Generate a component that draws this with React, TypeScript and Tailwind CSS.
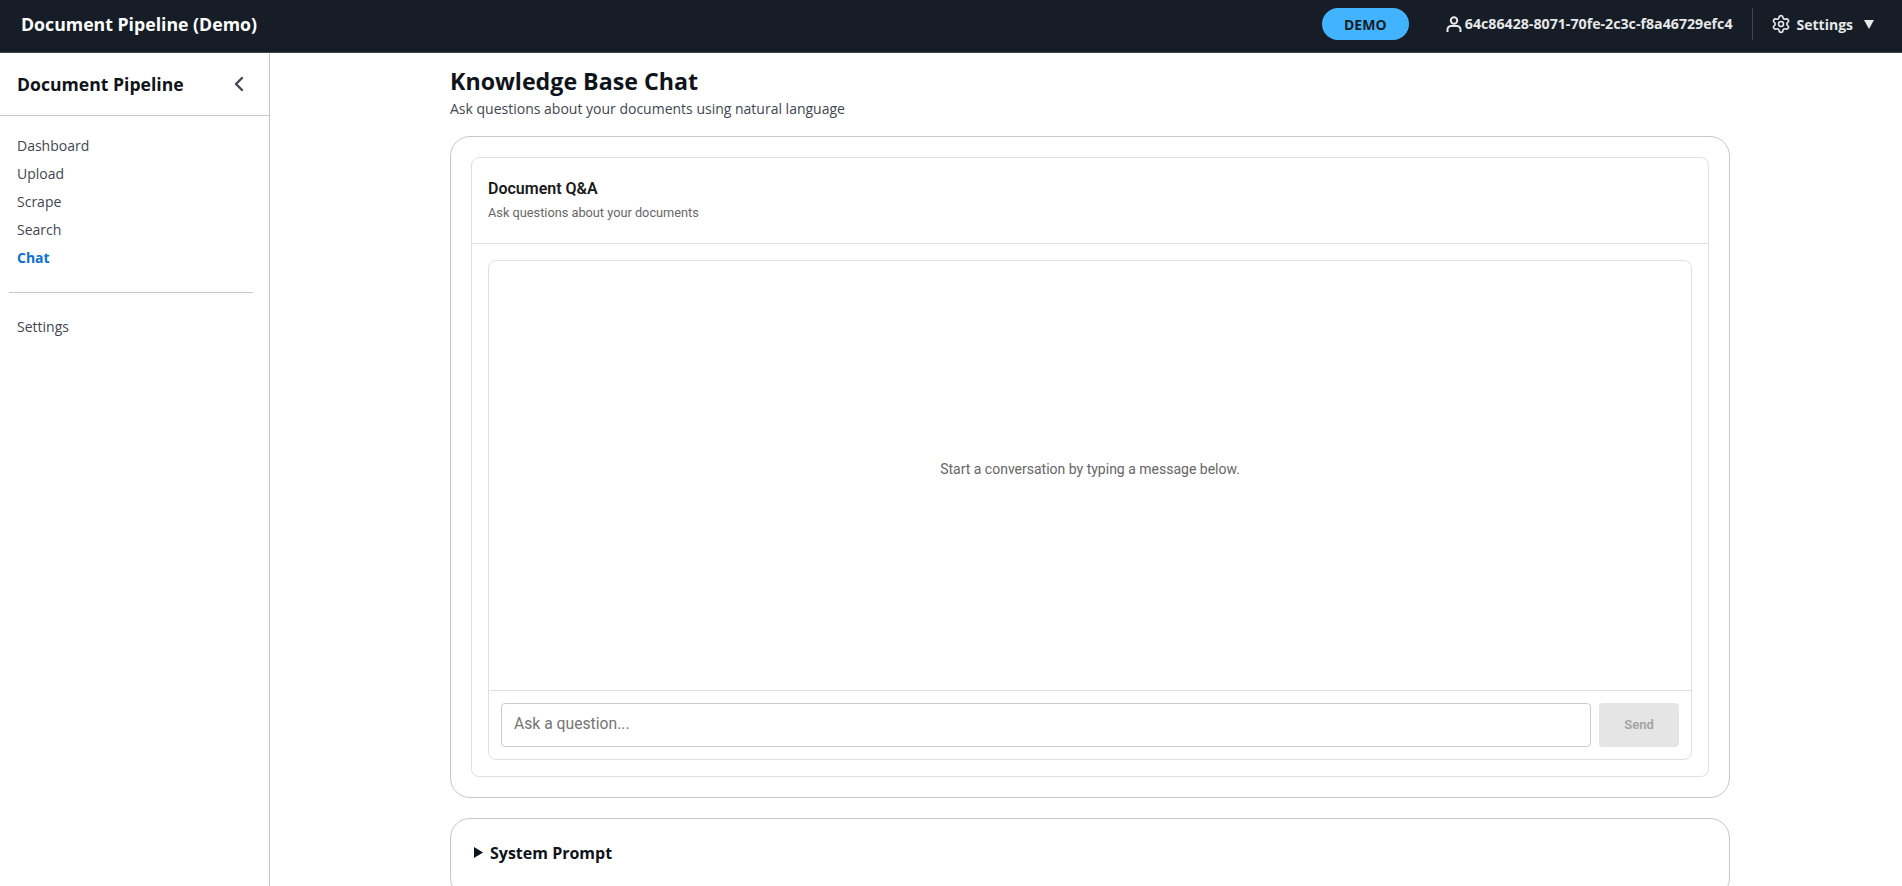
import { ChevronLeft, Settings } from "lucide-react";

const navItems = ["Dashboard", "Upload", "Scrape", "Search"];

const Header = () => (
  <header className="flex h-[53px] shrink-0 items-center justify-between border-b border-[#414750] bg-[#161d26] pb-[4px] pl-[21px] pr-[28px] text-white">
    <span className="text-[17.7px] font-bold">Document Pipeline (Demo)</span>
    <div className="flex items-center">
      <span className="flex h-8 w-[87px] items-center justify-center rounded-full bg-[#42b4ff] text-[14px] font-bold text-[#161d26]">
        DEMO
      </span>
      <div className="ml-[37px] flex items-center gap-[3px] text-[14.2px] font-bold text-[#e6e8ea]">
        {/* user profile icon, not in lucide with these proportions */}
        <svg width="16" height="16" viewBox="0 0 16 16" fill="none" stroke="currentColor" strokeWidth="2">
          <circle cx="8" cy="4.5" r="3.2" />
          <path d="M1.5 16v-2.5A3.5 3.5 0 0 1 5 10h6a3.5 3.5 0 0 1 3.5 3.5V16" />
        </svg>
        <span>64c86428-8071-70fe-2c3c-f8a46729efc4</span>
      </div>
      <div className="ml-[19px] h-8 w-px bg-[#414750]" />
      <div className="ml-[18px] flex items-center gap-[6px] text-[14px] font-bold text-[#e6e8ea]">
        <Settings size={20} strokeWidth={2} />
        <span>Settings</span>
        <svg className="ml-[5px]" width="10" height="9" viewBox="0 0 10 9">
          <path d="M0 0h10L5 9z" fill="#e6e8ea" />
        </svg>
      </div>
    </div>
  </header>
);

const Sidebar = () => (
  <aside className="flex w-[270px] shrink-0 flex-col border-r border-[#c6c6cd] bg-white">
    <div className="flex h-[63px] items-center justify-between border-b border-[#c6c6cd] pl-[17px] pr-[18px]">
      <span className="text-[17.6px] font-bold text-[#0f141a]">Document Pipeline</span>
      <ChevronLeft size={24} strokeWidth={2.4} className="text-[#424650]" />
    </div>
    <nav className="flex flex-col pt-[16px] text-[14px] leading-[28px] text-[#424650]">
      {navItems.map((item) => (
        <a key={item} className="pl-[17px]">
          {item}
        </a>
      ))}
      <a className="pl-[17px] font-bold text-[#0972d3]">Chat</a>
    </nav>
    <div className="ml-[9px] mr-[16px] mt-[20px] border-t border-[#c6c6cd]" />
    <a className="mt-[20px] pl-[17px] text-[14px] leading-[28px] text-[#424650]">Settings</a>
  </aside>
);

const ChatCard = () => (
  <div className="h-[662px] rounded-[20px] border border-[#c6c6cd] bg-white p-[20px]">
    <div className="flex h-full flex-col rounded-[8px] border border-[#e0e0e0] font-['Roboto',sans-serif]">
      <div className="h-[86px] shrink-0 border-b border-[#e0e0e0] px-[16px] pt-[19px]">
        <h2 className="text-[16px] font-semibold leading-[24px] text-[#1a1a1a]">Document Q&amp;A</h2>
        <p className="mt-[2px] text-[12.75px] leading-[20px] text-[#666666]">Ask questions about your documents</p>
      </div>
      <div className="flex flex-1 flex-col p-[16px]">
        <div className="flex flex-1 flex-col rounded-[8px] border border-[#e0e0e0]">
          <div className="flex flex-1 items-center justify-center pb-[12px] text-[14px] text-[#666666]">
            Start a conversation by typing a message below.
          </div>
          <div className="flex h-[69px] gap-2 border-t border-[#e0e0e0] px-[12px] pt-[12px]">
            <input
              className="h-[44px] flex-1 rounded-[4px] border border-[#cccccc] px-[12px] pb-[4px] text-[15.7px] placeholder:text-[#757575]"
              placeholder="Ask a question..."
              readOnly
            />
            <button className="h-[44px] w-[80px] rounded-[4px] bg-[#e5e5e5] text-[13px] font-semibold text-[#a3a3a3]">
              Send
            </button>
          </div>
        </div>
      </div>
    </div>
  </div>
);

const App = () => (
  <div className="flex h-screen flex-col overflow-hidden bg-white font-['Open_Sans',sans-serif]">
    <Header />
    <div className="flex min-h-0 flex-1">
      <Sidebar />
      <main className="min-w-0 flex-1 overflow-hidden pl-[180px]">
        <div className="w-[1280px]">
          <h1 className="mt-[11px] text-[23.2px] font-bold leading-[34px] text-[#0f141a]">Knowledge Base Chat</h1>
          <p className="mt-px text-[14px] leading-[20px] text-[#424650]">Ask questions about your documents using natural language</p>
          <div className="mt-[17px]">
            <ChatCard />
          </div>
          <div className="mt-[20px] flex h-[80px] items-start rounded-[20px] border border-[#c6c6cd] bg-white pl-[23px] pt-[22px]">
            <svg className="mt-[6px]" width="9" height="11" viewBox="0 0 9 11">
              <path d="M0 0v11L9 5.5z" fill="#0f141a" />
            </svg>
            <span className="ml-[7px] text-[16px] font-bold leading-[24px] text-[#0f141a]">System Prompt</span>
          </div>
        </div>
      </main>
    </div>
  </div>
);

export default App;
